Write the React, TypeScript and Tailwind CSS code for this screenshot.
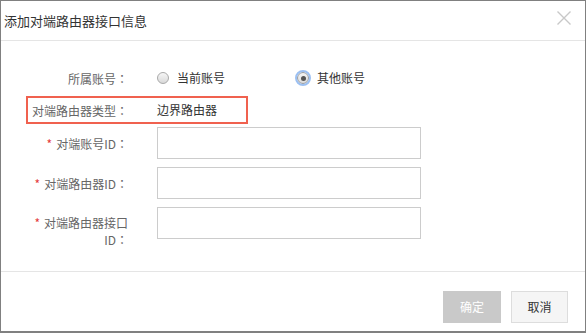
import React, { useState } from 'react';

const font = { fontFamily: '"Noto Sans CJK SC", "Liberation Sans", sans-serif' };

const Radio = ({ checked, label, onClick }: { checked: boolean; label: string; onClick: () => void }) => (
  <button onClick={onClick} className="flex items-center gap-[8px] text-[12px] text-[#333]">
    <span
      className={
        checked
          ? 'flex h-[12px] w-[12px] items-center justify-center rounded-full border border-[#9a9a9a] bg-gradient-to-b from-[#f4f4f4] to-[#dcdcdc] outline outline-2 outline-offset-0 outline-[#9cc0f2]'
          : 'h-[12px] w-[12px] rounded-full border border-[#a9a9a9] bg-gradient-to-b from-[#f6f6f6] to-[#d9d9d9]'
      }
    >
      {checked && <span className="h-[5px] w-[5px] rounded-full bg-[#555]" />}
    </span>
    {label}
  </button>
);

// colon centred in its box, as the original font draws it
const Colon = () => <span className="font-['Noto_Sans_CJK_TC']">：</span>;

const Label = ({ required, className, children }: { required?: boolean; className?: string; children: React.ReactNode }) => (
  <div className={'w-[99px] shrink-0 text-right text-[12px] leading-[17px] text-[#666] ' + (className ?? '')}>
    {required && <span className="mr-[4px] text-[#e4393c]">*</span>}
    {children}
    <Colon />
  </div>
);

export default function App() {
  const [account, setAccount] = useState<'current' | 'other'>('other');

  return (
    <div style={font} className="h-[333px] w-[586px] overflow-hidden bg-white">
      <div className="flex h-full flex-col border-x border-t border-b-2 border-[#808080]">
        {/* header */}
        <div className="flex h-[40px] shrink-0 items-center justify-between border-b border-[#e5e5e5] pl-[3px] pr-[14px]">
          <span className="text-[13px] text-[#333]">添加对端路由器接口信息</span>
          <svg width="14" height="14" viewBox="0 0 14 14" className="mb-[6px]">
            <path d="M0.5 0.5L13.5 13.5M13.5 0.5L0.5 13.5" stroke="#c8c8c8" strokeWidth="1.4" />
          </svg>
        </div>

        {/* body */}
        <div className="flex flex-1 flex-col pt-[21px]">
          <div className="flex h-[32px] items-center pl-[28px]">
            <Label>所属账号</Label>
            <div className="ml-[29px] flex items-center gap-[72px]">
              <Radio checked={account === 'current'} label="当前账号" onClick={() => setAccount('current')} />
              <Radio checked={account === 'other'} label="其他账号" onClick={() => setAccount('other')} />
            </div>
          </div>

          <div className="ml-[25px] mt-[2px] flex h-[28px] w-[222px] items-center border-2 border-[#f0614f] pl-[1px]">
            <Label>对端路由器类型</Label>
            <span className="ml-[29px] text-[12px] text-[#333]">边界路由器</span>
          </div>

          <div className="mt-[3px] flex flex-col gap-[8px]">
            <div className="flex h-[32px] items-center pl-[28px]">
              <Label required>对端账号ID</Label>
              <input className="ml-[29px] h-[32px] w-[264px] border border-[#ccc] outline-none" />
            </div>
            <div className="flex h-[32px] items-center pl-[28px]">
              <Label required>对端路由器ID</Label>
              <input className="ml-[29px] h-[32px] w-[264px] border border-[#ccc] outline-none" />
            </div>
            <div className="flex items-start pl-[28px]">
              <Label required className="mt-[7px]">
                对端路由器接口
                <br />
                ID
              </Label>
              <input className="ml-[29px] h-[32px] w-[264px] border border-[#ccc] outline-none" />
            </div>
          </div>
        </div>

        {/* footer */}
        <div className="flex h-[60px] shrink-0 items-start justify-end gap-[10px] border-t border-[#e5e5e5] pr-[17px] pt-[19px]">
          <button className="h-[32px] w-[58px] bg-[#c9c9c9] text-[12px] text-white">确定</button>
          <button className="h-[32px] w-[57px] border border-[#ddd] bg-[#f5f5f5] text-[12px] text-[#333]">取消</button>
        </div>
      </div>
    </div>
  );
}
